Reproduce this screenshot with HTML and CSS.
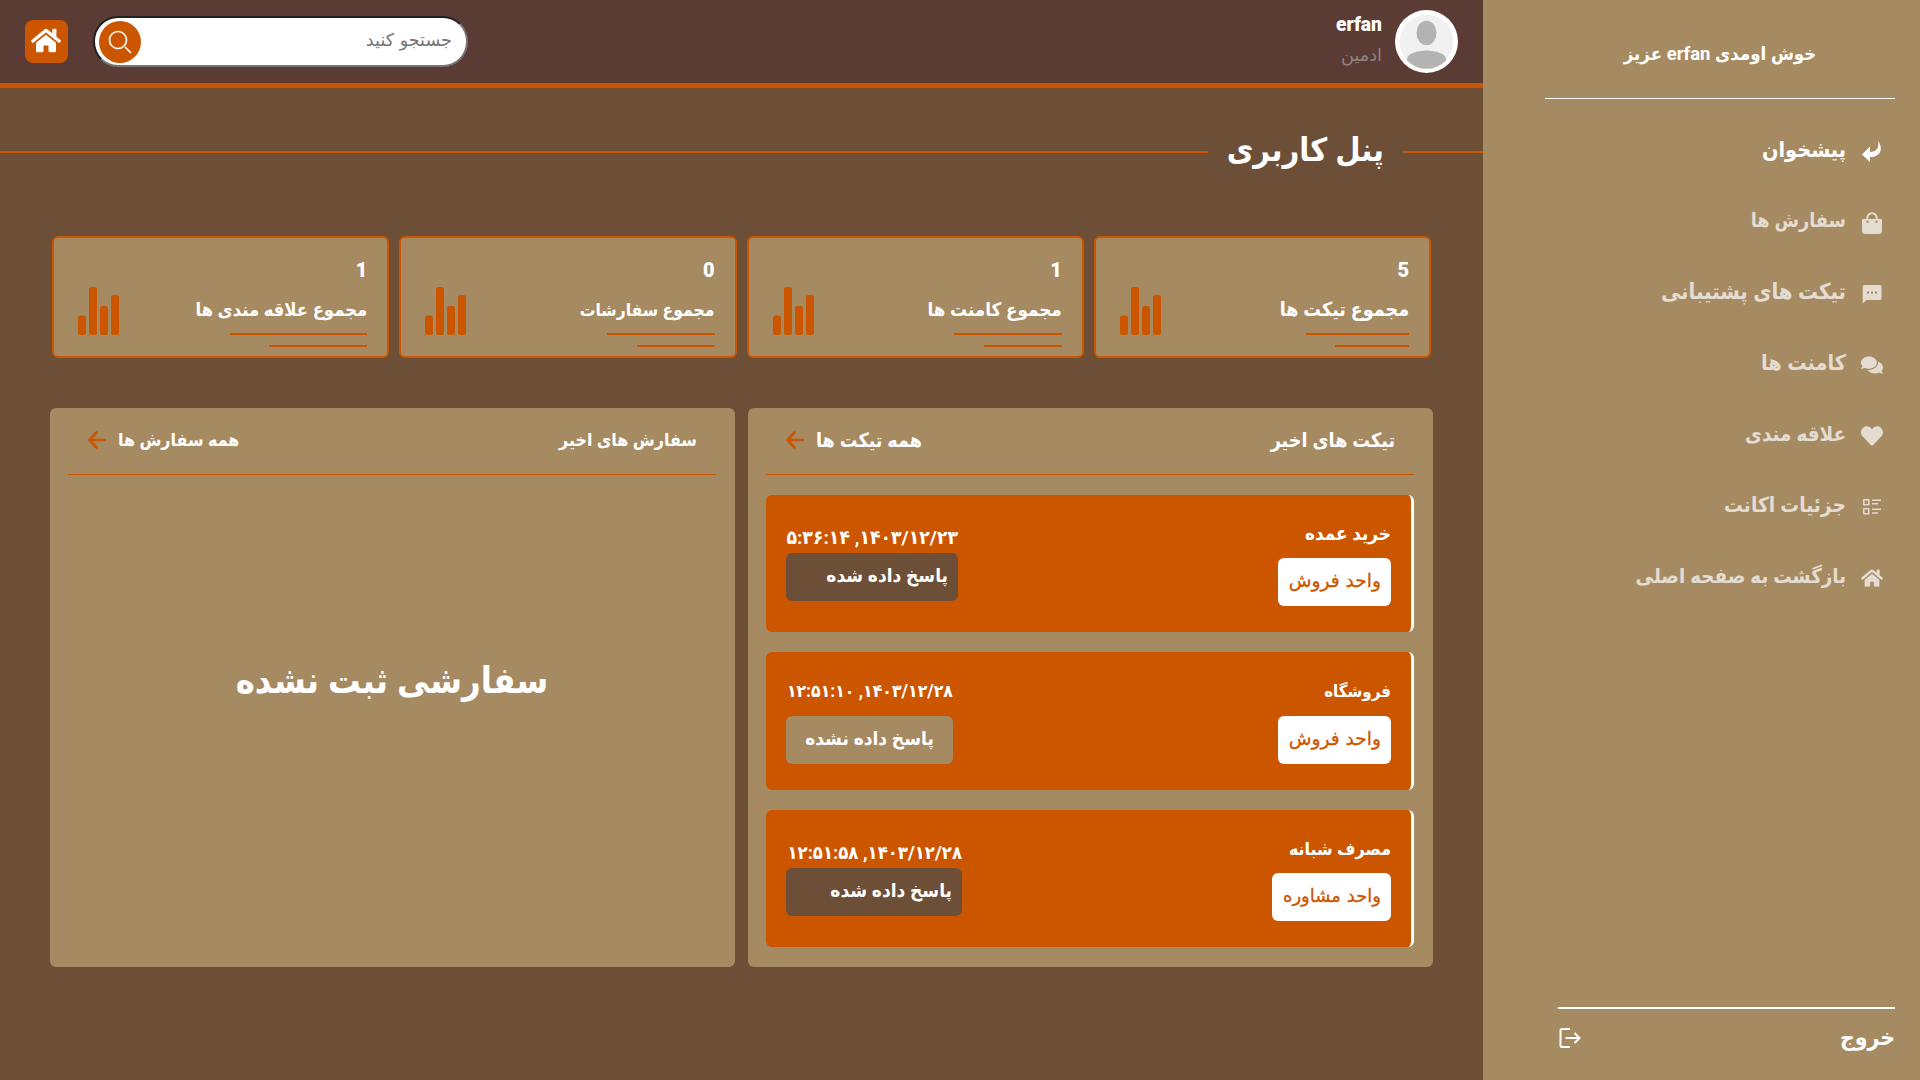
FILE: index.html
```html
<!DOCTYPE html>
<html lang="fa" dir="rtl">
<head>
<meta charset="utf-8">
<title>پنل کاربری</title>
<link rel="stylesheet" href="styles.css">
</head>
<body>
<svg width="0" height="0" class="sprite">
  <symbol id="house" viewBox="0 0 576 512"><path d="M280.37 148.26L96 300.11V464a16 16 0 0 0 16 16l112.06-.29a16 16 0 0 0 15.92-16V368a16 16 0 0 1 16-16h64a16 16 0 0 1 16 16v95.64a16 16 0 0 0 16 16.05L464 480a16 16 0 0 0 16-16V300L295.67 148.26a12.19 12.19 0 0 0-15.3 0zM571.6 251.47L488 182.56V44.05a12 12 0 0 0-12-12h-56a12 12 0 0 0-12 12v72.61L318.47 43a48 48 0 0 0-61 0L4.34 251.47a12 12 0 0 0-1.6 16.9l25.5 31A12 12 0 0 0 45.15 301l235.22-193.74a12.19 12.19 0 0 1 15.3 0L530.9 301a12 12 0 0 0 16.9-1.6l25.5-31a12 12 0 0 0-1.7-16.93z"/></symbol>
  <symbol id="bars" viewBox="0 0 41 48"><rect x="0" y="28.5" width="8" height="19.5" rx="2.5"/><rect x="11" y="0" width="8" height="48" rx="2.5"/><rect x="22" y="19" width="8" height="29" rx="2.5"/><rect x="33" y="8" width="8" height="40" rx="2.5"/></symbol>
  <symbol id="arrow" viewBox="0 0 18 18"><path d="M17 9H2M8.5 1.5 1.5 9l7 7.5" fill="none" stroke="currentColor" stroke-width="2.6" stroke-linecap="round" stroke-linejoin="round"/></symbol>
</svg>
<div class="app">
  <aside class="sidebar">
    <div class="welcome"><span>خوش اومدی erfan عزیز</span></div>
    <nav class="menu">
      <a class="item active"><svg viewBox="0 0 22 22"><path d="M17 0c5.500 7 3 16-8 16v5L1 13.500 9 5.500v5.300c6.500.2 9.500-4 8-10.800z"/></svg><span>پیشخوان</span></a>
      <a class="item cart"><svg viewBox="0 0 22 22"><path fill-rule="evenodd" d="M5.200 7C5.200 3 7.500.2 11 .2S16.800 3 16.800 7H20a1 1 0 0 1 1 1v10.500a3.500 3.500 0 0 1-3.500 3.500h-13A3.500 3.500 0 0 1 1 18.500V8a1 1 0 0 1 1-1zm2 0h7.600c0-3-1.300-4.800-3.800-4.800S7.200 4 7.200 7zM5.500 8.700v2h2v-2zm9 0v2h2v-2z"/></svg><span>سفارش ها</span></a>
      <a class="item support"><svg viewBox="0 0 22 22"><path fill-rule="evenodd" d="M3.500 2h15.500a1.500 1.500 0 0 1 1.500 1.500v12a1.500 1.500 0 0 1-1.500 1.500H5.500L1.700 20.500v-17A1.600 1.600 0 0 1 3.500 2zM6 8.500v2h2v-2zm4 0v2h2v-2zm4 0v2h2v-2z"/></svg><span>تیکت های پشتیبانی</span></a>
      <a class="item"><svg viewBox="0 0 576 512"><path d="M416 192c0-88.400-93.100-160-208-160S0 103.600 0 192c0 34.300 14.100 65.900 38 92-13.400 30.200-35.500 54.200-35.800 54.500-2.200 2.300-2.800 5.700-1.500 8.700S4.800 352 8 352c36.600 0 66.900-12.300 88.700-25 32.200 15.700 70.300 25 111.300 25 114.900 0 208-71.600 208-160zm122 220c23.900-26 38-57.700 38-92 0-66.900-53.500-124.200-129.300-148.100.9 6.600 1.300 13.300 1.300 20.100 0 105.900-107.700 192-240 192-10.800 0-21.300-.8-31.700-1.900C207.800 439.600 281.800 480 368 480c41 0 79.100-9.200 111.300-25 21.800 12.700 52.100 25 88.700 25 3.200 0 6.100-1.900 7.300-4.800 1.300-2.900.7-6.300-1.500-8.700-.3-.3-22.400-24.200-35.800-54.500z"/></svg><span>کامنت ها</span></a>
      <a class="item likes"><svg viewBox="0 0 512 512"><path d="M462.300 62.600C407.500 15.900 326 24.300 275.700 76.200L256 96.500l-19.700-20.300C186.100 24.300 104.500 15.900 49.700 62.600c-62.800 53.600-66.100 149.800-9.900 207.900l193.500 199.800c12.500 12.900 32.800 12.900 45.300 0l193.500-199.800c56.300-58.100 53-154.300-9.800-207.900z"/></svg><span>علاقه مندی</span></a>
      <a class="item account"><svg viewBox="0 0 22 22"><path d="M2.800 3.700h5v5h-5zM2.800 12.800h5v5h-5zM11 4.200h9M11 7.800h6M11 13.300h9M11 17h6" fill="none" stroke="currentColor" stroke-width="1.500" stroke-linejoin="round"/></svg><span>جزئیات اکانت</span></a>
      <a class="item back"><svg><use href="#house"/></svg><span>بازگشت به صفحه اصلی</span></a>
    </nav>
    <div class="logout"><span>خروج</span><svg viewBox="0 0 22 20"><path d="M11 1H3a1.500 1.500 0 0 0-1.500 1.500v15A1.500 1.500 0 0 0 3 19h8M6.500 10H20M15.500 5l5 5-5 5" fill="none" stroke="currentColor" stroke-width="2"/></svg></div>
  </aside>
  <main class="main">
    <header class="topbar">
      <div class="profile">
        <svg class="avatar" viewBox="0 0 63 63"><circle cx="31.500" cy="31.500" r="31.500" fill="#fff"/><circle cx="31.500" cy="31.500" r="26.800" fill="#f1f1f1"/><ellipse cx="31.500" cy="23" rx="10" ry="12.200" fill="#b3b3b3"/><path d="M12 49c0-5 10-8.500 19.500-8.500S51 44 51 49l0 1.500a27 27 0 0 1-39 0z" fill="#b3b3b3"/></svg>
        <div class="who"><b>erfan</b><span>ادمین</span></div>
      </div>
      <div class="tools">
        <div class="search"><span>جستجو کنید</span><i><svg viewBox="0 0 24 24"><path d="M17 17l6 6M18.500 10a8.500 8.500 0 1 1-17 0 8.500 8.500 0 0 1 17 0z" fill="none" stroke="#fff" stroke-width="1.700"/></svg></i></div>
        <a class="home"><svg><use href="#house"/></svg></a>
      </div>
    </header>
    <h1 class="heading"><span>پنل کاربری</span></h1>
    <section class="stats">
      <div class="stat total-tickets"><div class="info"><b>5</b><span>مجموع تیکت ها</span></div><svg><use href="#bars"/></svg></div>
      <div class="stat total-comments"><div class="info"><b>1</b><span>مجموع کامنت ها</span></div><svg><use href="#bars"/></svg></div>
      <div class="stat total-orders"><div class="info"><b>0</b><span>مجموع سفارشات</span></div><svg><use href="#bars"/></svg></div>
      <div class="stat total-likes"><div class="info"><b>1</b><span>مجموع علاقه مندی ها</span></div><svg><use href="#bars"/></svg></div>
    </section>
    <section class="panels">
      <div class="panel tickets">
        <div class="head"><span>تیکت های اخیر</span><a><span>همه تیکت ها</span><svg><use href="#arrow"/></svg></a></div>
        <article class="ticket answered">
          <div class="subject"><span>خرید عمده</span><em>واحد فروش</em></div>
          <div class="state"><time>۱۴۰۳/۱۲/۲۳, ۵:۳۶:۱۴</time><em>پاسخ داده شده</em></div>
        </article>
        <article class="ticket waiting">
          <div class="subject"><span>فروشگاه</span><em>واحد فروش</em></div>
          <div class="state"><time>۱۴۰۳/۱۲/۲۸, ۱۲:۵۱:۱۰</time><em>پاسخ داده نشده</em></div>
        </article>
        <article class="ticket answered last">
          <div class="subject"><span>مصرف شبانه</span><em>واحد مشاوره</em></div>
          <div class="state"><time>۱۴۰۳/۱۲/۲۸, ۱۲:۵۱:۵۸</time><em>پاسخ داده شده</em></div>
        </article>
      </div>
      <div class="panel orders">
        <div class="head"><span>سفارش های اخیر</span><a><span>همه سفارش ها</span><svg><use href="#arrow"/></svg></a></div>
        <p class="empty">سفارشی ثبت نشده</p>
      </div>
    </section>
  </main>
</div>
</body>
</html>
```
FILE: styles.css
```css
* { box-sizing: border-box; }
body {
  margin: 0;
  background: #6d4e37;
  color: #fff;
  font-family: Roboto, "DejaVu Sans Condensed", "DejaVu Sans", sans-serif;
  font-weight: 700;
  font-size: 18px;
  white-space: nowrap;
  overflow: hidden;
}
.sprite { position: absolute; }
svg { fill: currentColor; flex: none; display: block; }
em, i { font-style: normal; }
.app { display: flex; height: 1080px; }

/* sidebar */
.sidebar {
  width: 437px;
  flex: none;
  background: #a68a62;
  padding: 0 25px 0 62px;
  display: flex;
  flex-direction: column;
}
.welcome {
  height: 99px;
  border-bottom: 1px solid #fff;
  padding-top: 9px;
  display: flex;
  align-items: center;
  justify-content: center;
  font-size: 18.5px;
}
.menu { padding: 17px 12px 0 0; }
.item {
  height: 71px;
  display: flex;
  align-items: center;
  gap: 15px;
  font-size: 21.5px;
  opacity: .7;
}
.item.active { opacity: 1; }
.item svg { width: 22px; height: 22px; }
.item span { line-height: 40px; padding-bottom: 3px; }
.cart { font-size: 19.7px; }
.support { font-size: 22px; }
.likes { font-size: 20.4px; }
.account { font-size: 20.8px; }
.back { font-size: 20.3px; }
.logout {
  margin: auto 0 0 13px;
  height: 73px;
  border-top: 2px solid #fff;
  display: flex;
  justify-content: space-between;
  padding-top: 12px;
  font-size: 22.8px;
  line-height: 34px;
}
.logout svg { width: 22px; height: 20px; margin: 7px 0 0 1px; }

/* top bar */
.main { flex: 1; min-width: 0; }
.topbar {
  height: 88px;
  background: #5a3c35;
  border-bottom: 5px solid #cc5500;
  display: flex;
  justify-content: space-between;
  align-items: center;
  padding: 0 25px;
}
.profile { display: flex; gap: 13px; }
.avatar { width: 63px; height: 63px; }
.who { display: flex; flex-direction: column; line-height: 30px; }
.who b { font-size: 19.3px; }
.who span { font: 17.7px/30px "DejaVu Sans", sans-serif; color: #928180; }
.tools { display: flex; align-items: center; gap: 25px; }
.search {
  width: 375px;
  height: 51px;
  border: 2px inset #767676;
  border-radius: 25px;
  background: #fff;
  color: #757575;
  font: 17.6px "DejaVu Sans", sans-serif;
  display: flex;
  align-items: center;
  justify-content: space-between;
  padding: 0 14px 0 4px;
}
.search span { padding-bottom: 3px; }
.search i {
  width: 42px;
  height: 42px;
  border-radius: 50%;
  background: #cc5500;
  display: grid;
  place-items: center;
}
.search i svg { width: 24px; height: 24px; }
.home {
  width: 43px;
  height: 43px;
  border-radius: 8px;
  background: #cc5500;
  display: grid;
  place-items: center;
  padding: 0 1px 2px 0;
}
.home svg { width: 30px; height: 27px; }

/* title */
.heading {
  margin: 0;
  height: 148px;
  padding-bottom: 20px;
  display: flex;
  align-items: center;
  gap: 19px;
  font-size: 32.4px;
}
.heading::before, .heading::after { content: ""; height: 2px; background: #cc5500; width: 80px; }
.heading::after { flex: 1; }
.heading span { line-height: 50px; padding-bottom: 5px; }

/* counters */
.stats {
  display: grid;
  grid-template-columns: repeat(4, 1fr);
  gap: 10px;
  padding: 0 52px;
  margin-bottom: 50px;
}
.stat {
  height: 122px;
  border: 2px solid #cc5500;
  border-radius: 6px;
  background: #a68a62;
  padding: 17px 20px 0 24px;
  display: flex;
  justify-content: space-between;
}
.stat > svg { width: 41px; height: 48px; color: #cc5500; margin-top: 32px; }
.info { display: flex; flex-direction: column; }
.info b { font-size: 20px; line-height: 30px; margin-bottom: 10px; }
.info span { line-height: 30px; margin-bottom: 8px; }
.total-tickets span { font-size: 19.5px; }
.total-comments span { font-size: 18.7px; }
.total-orders span { font-size: 17.4px; }
.total-likes span { font-size: 18.3px; }
.info::after {
  content: "";
  width: 80%;
  height: 14px;
  background:
    linear-gradient(#cc5500, #cc5500) 0 0 / 100% 2px no-repeat,
    linear-gradient(#cc5500, #cc5500) 100% 12px / 72% 2px no-repeat;
}

/* panels */
.panels { display: flex; gap: 13px; padding: 0 50px; }
.panel {
  flex: 1;
  height: 559px;
  border-radius: 6px;
  background: #a68a62;
  padding: 0 19px 0 18px;
}
.head {
  height: 67px;
  border-bottom: 1px solid #cc5500;
  display: flex;
  justify-content: space-between;
  align-items: center;
  padding: 0 19px 2px 20px;
  margin-bottom: 20px;
}
.head a { display: flex; align-items: center; gap: 12px; }
.head svg { width: 18px; height: 18px; color: #cc5500; }
.tickets .head { font-size: 19.6px; }
.orders .head { font-size: 17.7px; }
.ticket {
  height: 137px;
  margin-bottom: 20px;
  border-right: 3px solid #fff;
  border-radius: 6px;
  background: #cc5500;
  padding: 24px 20px 0;
  display: flex;
  justify-content: space-between;
}
.ticket.waiting { height: 138px; }
.ticket em {
  height: 48px;
  border-radius: 6px;
  display: flex;
  align-items: center;
  padding: 0 10px 3px;
}
.subject { display: flex; flex-direction: column; align-items: flex-start; }
.subject > span { font-size: 18.8px; line-height: 30px; margin-bottom: 9px; }
.waiting .subject > span { font-size: 16.8px; margin-bottom: 10px; }
.last .subject > span { font-size: 17.7px; }
.subject em {
  width: 113px;
  background: #fff;
  color: #cc5500;
  font-family: "DejaVu Sans", sans-serif;
  font-size: 18.6px;
  font-weight: 400;
  -webkit-text-stroke: .3px #cc5500;
}
.last .subject em { width: 119px; font-size: 18px; }
.state { display: flex; flex-direction: column; width: 172px; padding-top: 4px; }
.state time { line-height: 30px; font-size: 19.2px; }
.state em { background: #6d4e37; font-size: 19px; }
.waiting .state { width: 167px; padding-top: 0; }
.waiting time { font-size: 17.5px; margin-bottom: 10px; }
.waiting .state em { background: #a68a62; justify-content: center; }
.last .state { width: 176px; }
.last time { font-size: 18.4px; }
.empty { margin: 0; text-align: center; font-size: 36.2px; line-height: 60px; padding-top: 156px; }
```
